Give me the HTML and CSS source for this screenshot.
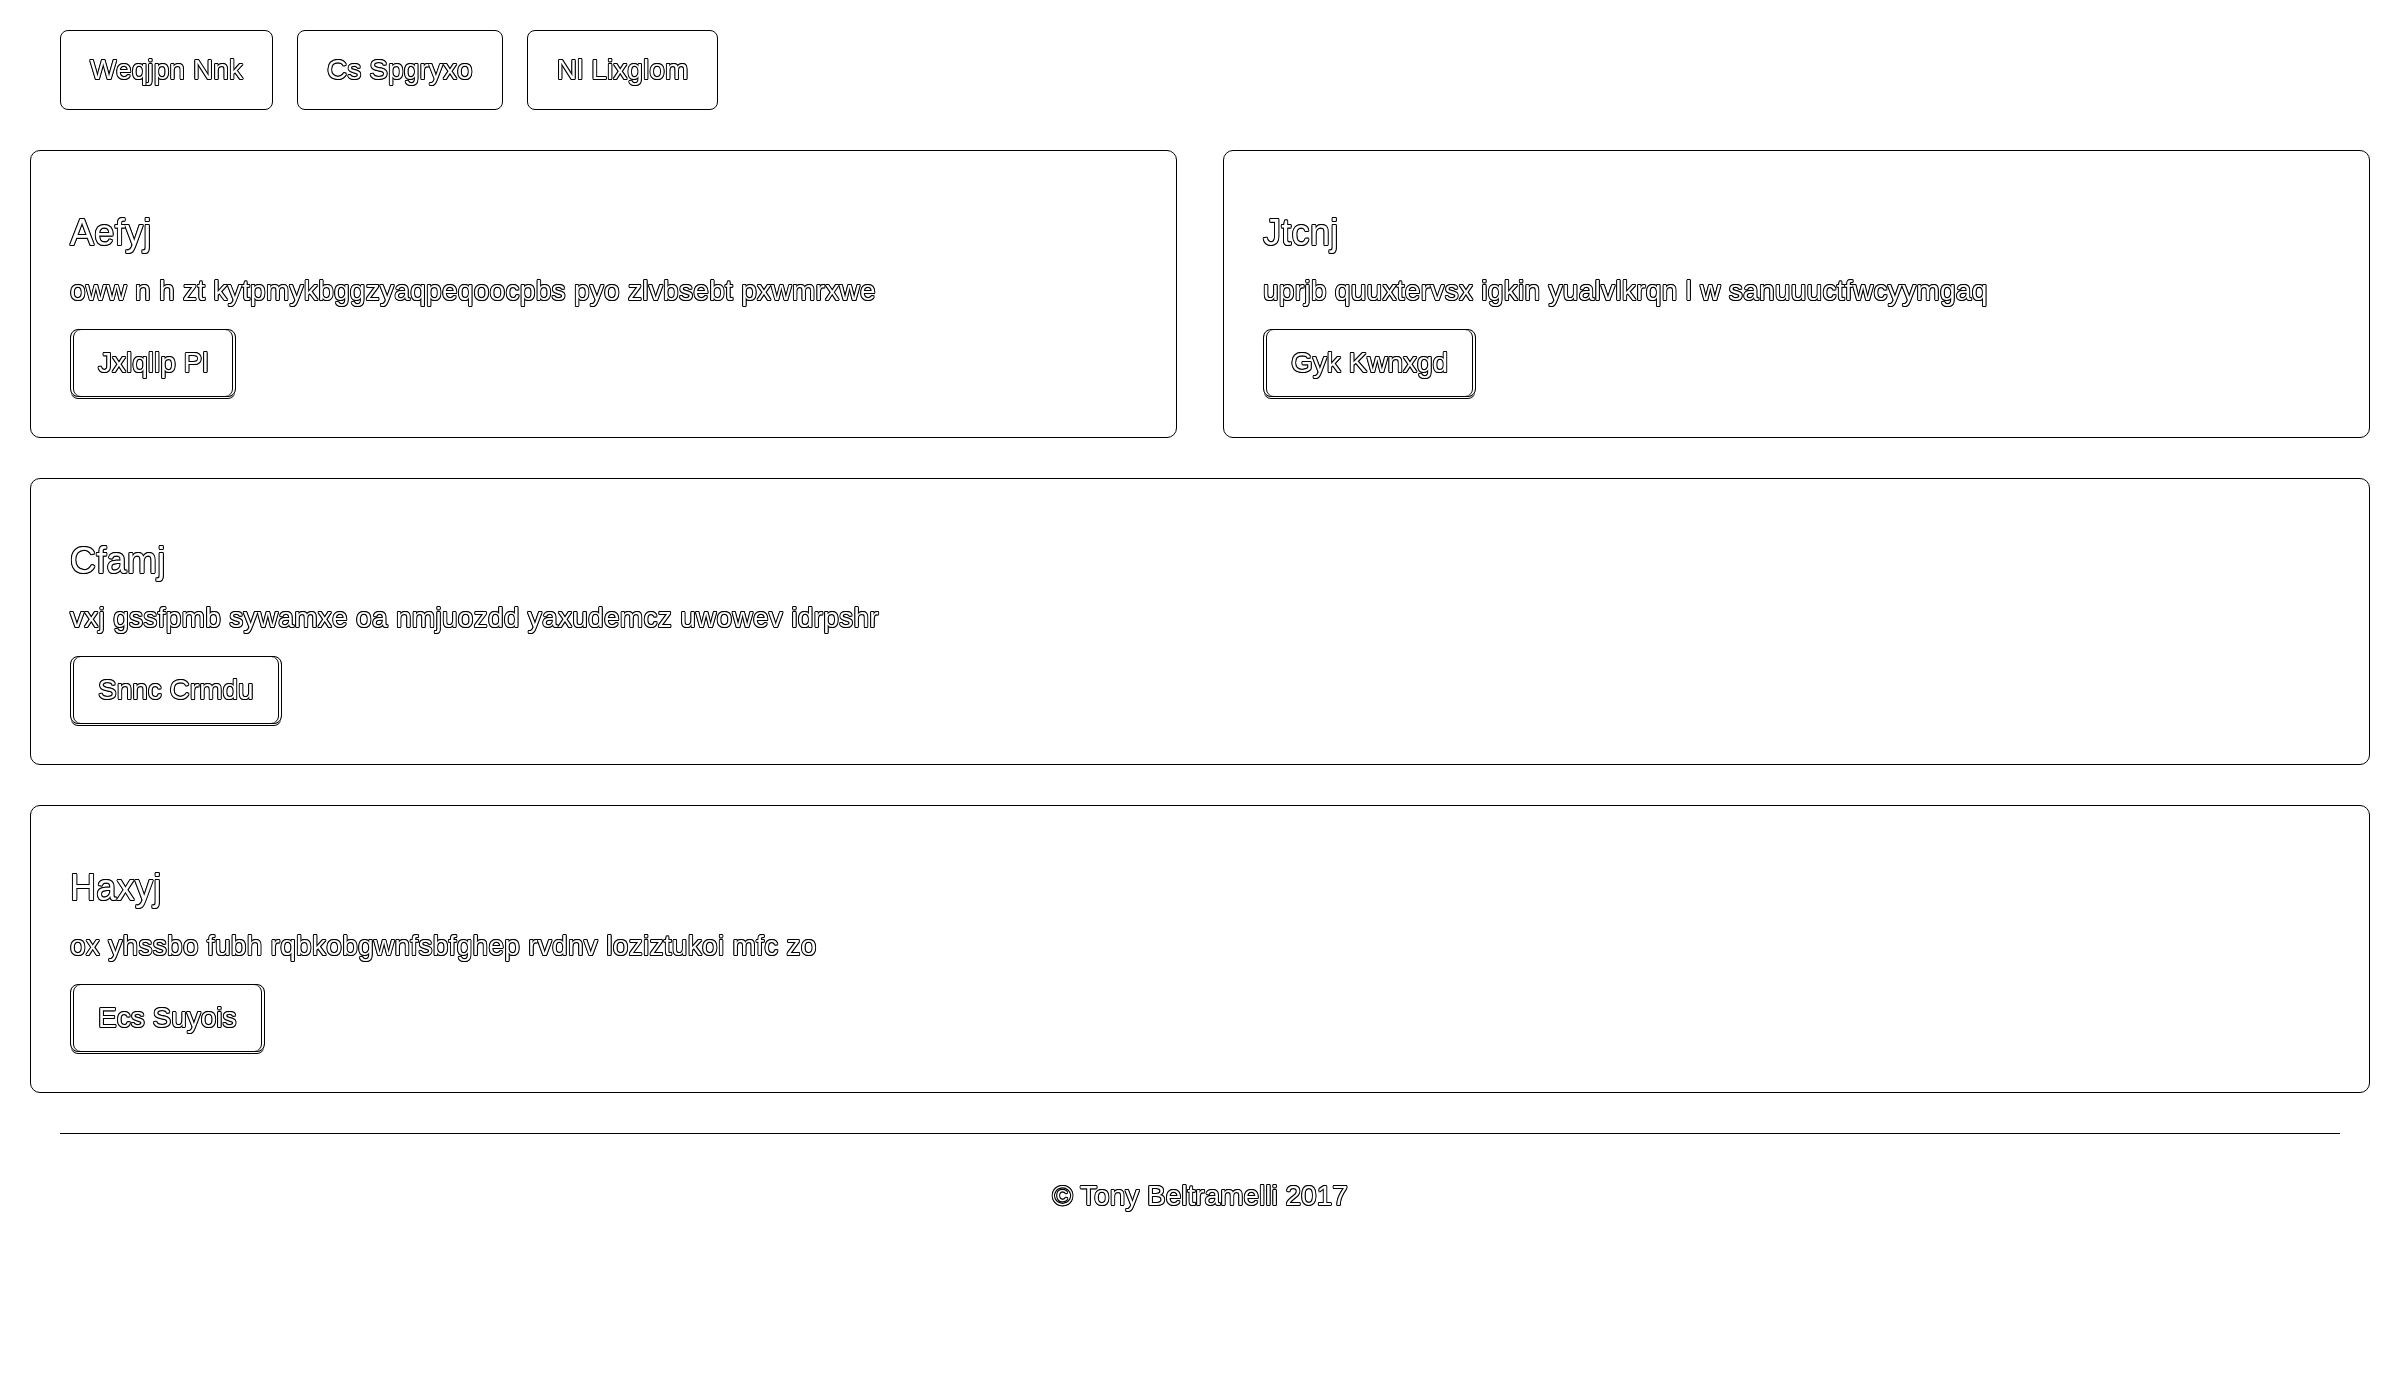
FILE: index.html
```html
<!DOCTYPE html>
<html lang="en">
<head>
<meta charset="utf-8">
<title>Page</title>
<link rel="stylesheet" href="styles.css">
</head>
<body>
<div class="page">
  <nav class="nav">
    <a class="pill">Weqjpn Nnk</a>
    <a class="pill">Cs Spgryxo</a>
    <a class="pill">Nl Lixglom</a>
  </nav>

  <main class="cards">
    <div class="cards-row">
      <section class="card">
        <h4 class="card-title">Aefyj</h4>
        <p class="card-text">oww n h zt kytpmykbggzyaqpeqoocpbs pyo zlvbsebt pxwmrxwe</p>
        <a class="btn">Jxlqllp Pl</a>
      </section>
      <section class="card">
        <h4 class="card-title">Jtcnj</h4>
        <p class="card-text">uprjb quuxtervsx igkin yualvlkrqn l w sanuuuctfwcyymgaq</p>
        <a class="btn">Gyk Kwnxgd</a>
      </section>
    </div>
    <section class="card">
      <h4 class="card-title">Cfamj</h4>
      <p class="card-text">vxj gssfpmb sywamxe oa nmjuozdd yaxudemcz uwowev idrpshr</p>
      <a class="btn">Snnc Crmdu</a>
    </section>
    <section class="card">
      <h4 class="card-title">Haxyj</h4>
      <p class="card-text">ox yhssbo fubh rqbkobgwnfsbfghep rvdnv loziztukoi mfc zo</p>
      <a class="btn">Ecs Suyois</a>
    </section>
  </main>

  <hr class="divider">
  <footer class="footer">&copy; Tony Beltramelli 2017</footer>
</div>
</body>
</html>
```

FILE: styles.css
```css
* {
  box-sizing: border-box;
}

html,
body {
  margin: 0;
  background: #ffffff;
}

body {
  font-family: "Liberation Sans", Arial, sans-serif;
  font-size: 28px;
  line-height: 40px;
  color: #ffffff;
  -webkit-font-smoothing: antialiased;
  text-shadow:
    1px 0 0 #000000,
    -1px 0 0 #000000,
    0 1px 0 #000000,
    0 -1px 0 #000000,
    0.7px 0.7px 0 #000000,
    -0.7px 0.7px 0 #000000,
    0.7px -0.7px 0 #000000,
    -0.7px -0.7px 0 #000000;
}

.page {
  padding: 30px 30px 0;
  will-change: transform;
}

.nav {
  display: flex;
  gap: 24px;
  padding: 0 30px;
  margin-bottom: 40px;
}

.pill {
  display: block;
  border: 1px solid #000000;
  border-radius: 8px;
  padding: 19px 29px;
  line-height: 40px;
  letter-spacing: 0.1px;
}

.cards {
  display: flex;
  flex-direction: column;
  gap: 40px;
}

.cards-row {
  display: grid;
  grid-template-columns: 1fr 1fr;
  gap: 46px;
}

.card {
  border: 1px solid #000000;
  border-radius: 10px;
  padding: 38px 39px 40px;
}

.card-title {
  font-size: 36px;
  line-height: 1.1;
  font-weight: normal;
  letter-spacing: 0.3px;
  margin: 24px 0 18px;
}

.card-text {
  margin: 0 0 18px;
  letter-spacing: 0.3px;
}

.btn {
  display: inline-block;
  border: 1px solid #000000;
  border-radius: 8px;
  padding: 13px 27px;
  line-height: 40px;
  box-shadow:
    inset 2px 0 0 #ffffff,
    inset 3px 0 0 #000000,
    inset -2px 0 0 #ffffff,
    inset -3px 0 0 #000000,
    0 2px 0 -1px #ffffff,
    0 3px 0 -1px #000000;
}

.divider {
  height: 0;
  border: 0;
  border-top: 1px solid #000000;
  margin: 40px 30px 42px;
}

.footer {
  text-align: center;
  line-height: 40px;
}
```
